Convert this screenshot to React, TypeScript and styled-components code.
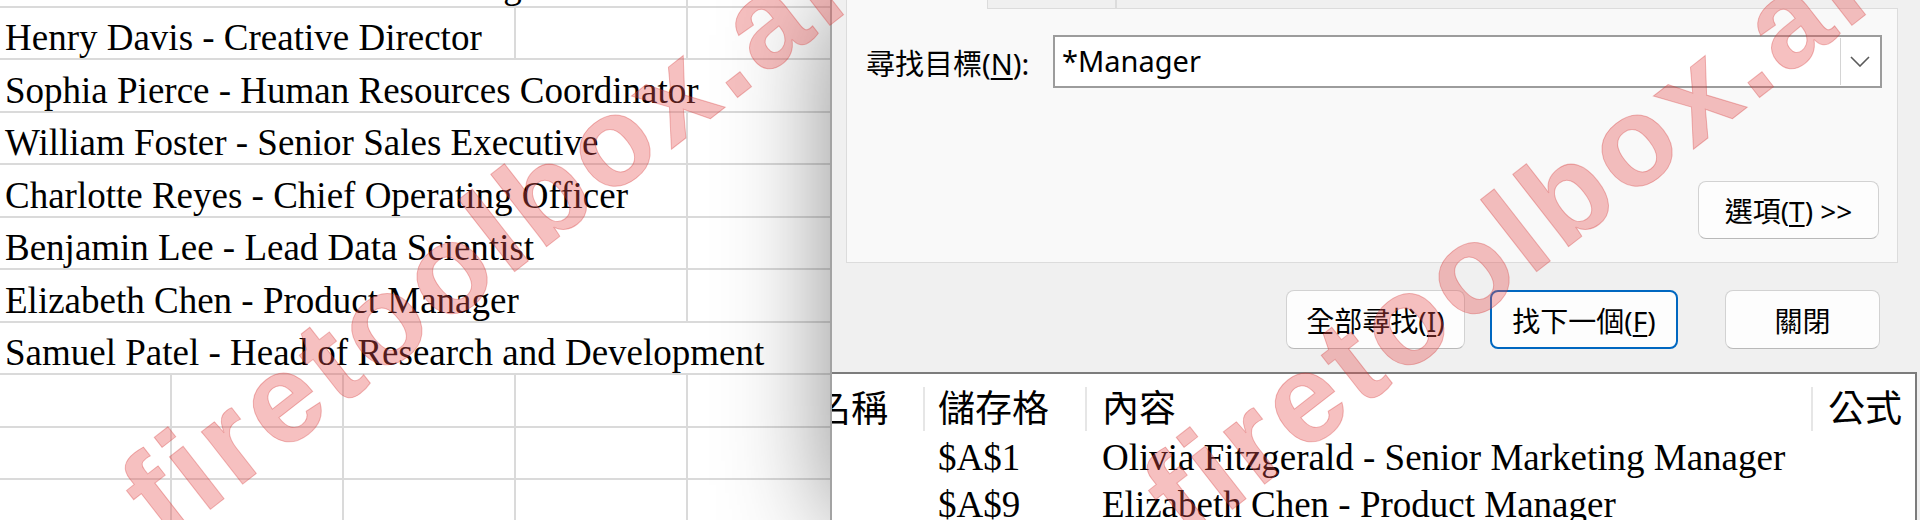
import React from 'react';
import styled, { createGlobalStyle } from 'styled-components';

const GlobalStyle = createGlobalStyle`
  html, body { margin: 0; padding: 0; background: #fff; overflow: hidden; }
  #root { width: 1920px; height: 520px; }
`;

const COL = 172;
const GRID = '#dadada';
const UI_FONT = `"Noto Sans", "Noto Sans CJK TC", sans-serif`;
const CELL_FONT = `"Liberation Serif", "Noto Sans CJK TC", serif`;
const CJK_FONT = `"Noto Sans CJK TC", sans-serif`;

const sheetRows = [
  { text: 'Daniel Harrison - VP of Marketing', span: 4 },
  { text: 'Henry Davis - Creative Director', span: 3 },
  { text: 'Sophia Pierce - Human Resources Coordinator', span: 5 },
  { text: 'William Foster - Senior Sales Executive', span: 4 },
  { text: 'Charlotte Reyes - Chief Operating Officer', span: 4 },
  { text: 'Benjamin Lee - Lead Data Scientist', span: 4 },
  { text: 'Elizabeth Chen - Product Manager', span: 4 },
  { text: 'Samuel Patel - Head of Research and Development', span: 5 },
  { text: '', span: 1 },
  { text: '', span: 1 },
  { text: '', span: 1 },
];

// result list columns: cell width (without divider) and text inset
const resultCols = [
  { width: 124, pad: 15 },
  { width: 160, pad: 13 },
  { width: 724, pad: 15 },
  { width: 200, pad: 15 },
];

const results = [
  { cell: '$A$1', value: 'Olivia Fitzgerald - Senior Marketing Manager' },
  { cell: '$A$9', value: 'Elizabeth Chen - Product Manager' },
];

const App = () => {
  return (
    <Screen>
      <GlobalStyle />
      <Sheet>
        {sheetRows.map((row, i) => (
          <Row key={i}>
            <Cell $span={row.span}>{row.text}</Cell>
            {Array.from({ length: 5 - row.span }).map((_, j) => (
              <Cell key={j} />
            ))}
          </Row>
        ))}
      </Sheet>

      <Dialog>
        <TabStrip>
          <ActiveTab />
          <InactiveTab />
          <TabFiller />
        </TabStrip>

        <Panel>
          <FindRow>
            <Label>
              尋找目標(<Key>N</Key>):
            </Label>
            <Input>
              <InputText>*Manager</InputText>
              <DropButton>
                <svg width="20" height="11" viewBox="0 0 20 11">
                  <path d="M1 1 L10 10 L19 1" fill="none" stroke="#5a5a5a" strokeWidth="1.6" />
                </svg>
              </DropButton>
            </Input>
          </FindRow>
          <OptionsButton $width={181}>
            選項(<Key>T</Key>) &gt;&gt;
          </OptionsButton>
        </Panel>

        <ButtonBar>
          <Button $width={179}>
            全部尋找(<Key>I</Key>)
          </Button>
          <Button $width={188} $lead={25} $primary>
            找下一個(<Key>F</Key>)
          </Button>
          <Button $width={155} $lead={47}>
            關閉
          </Button>
        </ButtonBar>

        <ResultList>
          <ResultInner>
            <HeaderRow>
              {['名稱', '儲存格', '內容', '公式'].map((title, i) => (
                <React.Fragment key={title}>
                  <HeaderCell $width={resultCols[i].width} $pad={resultCols[i].pad}>
                    {title}
                  </HeaderCell>
                  {i < 3 && <Divider />}
                </React.Fragment>
              ))}
            </HeaderRow>
            {results.map((r) => (
              <ResultRow key={r.cell}>
                <ResultCell $width={resultCols[0].width + 2} $pad={resultCols[0].pad} />
                <ResultCell $width={resultCols[1].width + 2} $pad={resultCols[1].pad}>
                  {r.cell}
                </ResultCell>
                <ResultCell $width={resultCols[2].width + 2} $pad={resultCols[2].pad}>
                  {r.value}
                </ResultCell>
              </ResultRow>
            ))}
          </ResultInner>
        </ResultList>
      </Dialog>

      <Watermark $left={178}>firetoolbox.ai</Watermark>
      <Watermark $left={1200}>firetoolbox.ai</Watermark>
    </Screen>
  );
};

const Screen = styled.div`
  position: relative;
  display: flex;
  width: 1920px;
  height: 520px;
  overflow: hidden;
  background: #fff;
`;

const Sheet = styled.div`
  flex: 0 0 830px;
  overflow: hidden;
  font-family: ${CELL_FONT};
  font-size: 37px;
  color: #000;
`;

const Row = styled.div`
  display: flex;
  width: ${COL * 5}px;
  height: 52.55px;
  box-sizing: border-box;
  border-bottom: 2px solid ${GRID};
  &:first-child {
    margin-top: -45px;
  }
`;

const Cell = styled.div<{ $span?: number }>`
  flex: 0 0 ${(p) => (p.$span ?? 1) * COL}px;
  box-sizing: border-box;
  border-right: 2px solid ${GRID};
  display: flex;
  align-items: flex-end;
  padding: 0 0 2px 5px;
  line-height: 1;
  white-space: nowrap;
`;

const Dialog = styled.div`
  position: relative;
  z-index: 1;
  flex: 0 0 1090px;
  width: 1090px;
  min-width: 0;
  box-sizing: border-box;
  overflow: hidden;
  display: flex;
  flex-direction: column;
  background: #f0f0f0;
  border-left: 2px solid #a3a3a3;
  box-shadow: 0 0 100px rgba(0, 0, 0, 0.45);
  font-family: ${UI_FONT};
  font-size: 29px;
  color: #000;
`;

const TabStrip = styled.div`
  display: flex;
  height: 9px;
  margin: 0 22px 0 14px;
`;

const ActiveTab = styled.div`
  flex: 0 0 142px;
  box-sizing: border-box;
  background: #f9f9f9;
  border-left: 1px solid #dcdcdc;
  border-right: 1px solid #dcdcdc;
`;

const InactiveTab = styled.div`
  flex: 0 0 129px;
  box-sizing: border-box;
  background: #f0f0f0;
  border-right: 2px solid #dcdcdc;
  border-bottom: 1px solid #dcdcdc;
`;

const TabFiller = styled.div`
  flex: 1;
  border-bottom: 1px solid #dcdcdc;
`;

const Panel = styled.div`
  height: 254px;
  box-sizing: border-box;
  margin: 0 22px 0 14px;
  padding: 26px 15px 23px 19px;
  background: #f9f9f9;
  border: 1px solid #dcdcdc;
  border-top: none;
  display: flex;
  flex-direction: column;
  justify-content: space-between;
`;

const FindRow = styled.div`
  display: flex;
  align-items: center;
`;

const Label = styled.div`
  flex: 0 0 187px;
  white-space: nowrap;
`;

const Key = styled.span`
  text-decoration: underline;
  text-underline-offset: 3px;
  text-decoration-thickness: 2px;
`;

const Input = styled.div`
  flex: 1;
  min-width: 0;
  height: 53px;
  box-sizing: border-box;
  display: flex;
  align-items: center;
  background: #fff;
  border: 2px solid #9c9c9c;
`;

const InputText = styled.div`
  flex: 1;
  padding: 0 0 3px 7px;
`;

const DropButton = styled.div`
  align-self: stretch;
  flex: 0 0 38px;
  margin: 1px 2px 1px 0;
  box-sizing: border-box;
  border-left: 1px solid #d4d4d4;
  display: flex;
  align-items: center;
  justify-content: center;
`;

const Button = styled.button<{ $width: number; $lead?: number; $primary?: boolean }>`
  flex-shrink: 0;
  width: ${(p) => p.$width}px;
  height: 59px;
  margin-left: ${(p) => p.$lead ?? 0}px;
  padding: 0;
  box-sizing: border-box;
  background: #fdfdfd;
  border: ${(p) => (p.$primary ? '2px solid #0067c0' : '1px solid #d2d2d2')};
  border-bottom-color: ${(p) => (p.$primary ? '#0067c0' : '#b9b9b9')};
  border-radius: 8px;
  font-family: ${UI_FONT};
  font-size: 28px;
  color: #000;
  white-space: nowrap;
`;

const OptionsButton = styled(Button)`
  align-self: flex-end;
  height: 58px;
  margin-right: 3px;
`;

const ButtonBar = styled.div`
  height: 109px;
  box-sizing: border-box;
  display: flex;
  justify-content: flex-end;
  align-items: flex-start;
  padding: 27px 40px 0 0;
`;

const ResultList = styled.div`
  flex: 1;
  min-width: 0;
  margin-right: 3px;
  background: #fff;
  border-top: 2px solid #7c7c7c;
  border-right: 2px solid #7c7c7c;
  overflow: hidden;
  font-family: ${CELL_FONT};
  font-size: 37px;
`;

const ResultInner = styled.div`
  margin-left: -33px;
`;

const HeaderRow = styled.div`
  display: flex;
  height: 64px;
  align-items: center;
`;

const HeaderCell = styled.div<{ $width: number; $pad: number }>`
  flex: 0 0 ${(p) => p.$width}px;
  box-sizing: border-box;
  padding-left: ${(p) => p.$pad}px;
  font-family: ${CJK_FONT};
  white-space: nowrap;
  overflow: hidden;
`;

const Divider = styled.div`
  flex: 0 0 2px;
  height: 44px;
  align-self: flex-start;
  margin-top: 13px;
  background: #e6e6e6;
`;

const ResultRow = styled.div`
  display: flex;
  height: 47px;
  line-height: 39px;
`;

const ResultCell = styled.div<{ $width: number; $pad: number }>`
  flex: 0 0 ${(p) => p.$width}px;
  box-sizing: border-box;
  padding-left: ${(p) => p.$pad}px;
  white-space: nowrap;
`;

const Watermark = styled.div<{ $left: number }>`
  position: absolute;
  z-index: 2;
  left: ${(p) => p.$left}px;
  bottom: -40px;
  transform: rotate(-38deg);
  transform-origin: 0 100%;
  font-family: "Liberation Sans", sans-serif;
  font-weight: 700;
  font-size: 126px;
  line-height: 1;
  letter-spacing: 6px;
  white-space: nowrap;
  color: rgba(230, 80, 80, 0.36);
  -webkit-text-stroke: 1px rgba(210, 40, 40, 0.3);
  pointer-events: none;
`;

export default App;
